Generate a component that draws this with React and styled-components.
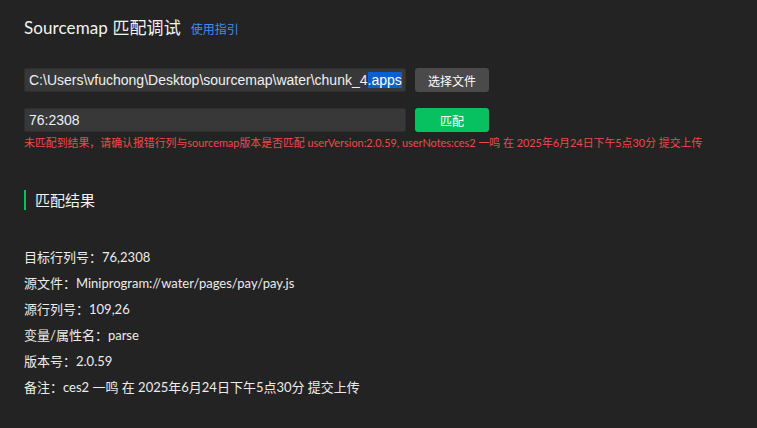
import React from "react";
import styled, { createGlobalStyle } from "styled-components";

const GlobalStyle = createGlobalStyle`
  html, body {
    margin: 0;
    padding: 0;
    background: #232323;
  }
  body {
    font-family: Lato, "Noto Sans CJK SC", sans-serif;
    color: #e8e8e8;
  }
`;

const Page = styled.div`
  width: 757px;
  height: 428px;
  box-sizing: border-box;
  padding: 14px 24px 0;
  background: #232323;
  overflow: hidden;
`;

const Header = styled.div`
  display: flex;
  align-items: baseline;
  gap: 10px;
  height: 24px;
`;

const Title = styled.h1`
  margin: 0;
  font-size: 17px;
  font-weight: 400;
  color: #f2f2f2;
  letter-spacing: 0.1px;
`;

const GuideLink = styled.a`
  font-size: 12px;
  color: #3f8ef0;
  text-decoration: none;
  cursor: pointer;
`;

const Row = styled.div`
  display: flex;
  align-items: center;
  gap: 9px;
  margin-top: ${(p) => p.$top}px;
`;

const Field = styled.div`
  width: 382px;
  height: 24px;
  box-sizing: border-box;
  padding: 0 4px;
  background: #383838;
  border: 1px solid #2e2e2e;
  border-radius: 2px;
  font-family: "Liberation Sans", Arial, sans-serif;
  font-size: 14px;
  line-height: 22px;
  color: #f0f0f0;
  white-space: nowrap;
  overflow: hidden;
`;

const Selected = styled.span`
  background: #0b5fce;
  color: #ffffff;
`;

const Button = styled.button`
  width: 74px;
  height: 24px;
  border: none;
  border-radius: 3px;
  padding: 0;
  background: ${(p) => (p.$primary ? "#07c160" : "#4a4a4a")};
  color: #ffffff;
  font-family: "Noto Sans CJK SC", sans-serif;
  font-size: 12px;
  cursor: pointer;
`;

const ErrorText = styled.p`
  margin: 4px 0 0;
  font-size: 10.9px;
  line-height: 14px;
  color: #f0494b;
  white-space: nowrap;
`;

const SectionTitle = styled.h2`
  margin: 40px 0 0;
  padding-left: 9px;
  border-left: 2px solid #07c160;
  height: 20px;
  line-height: 20px;
  font-size: 15px;
  font-weight: 400;
  color: #f2f2f2;
`;

const ResultList = styled.div`
  display: flex;
  flex-direction: column;
  margin-top: 34px;
`;

const ResultRow = styled.div`
  height: 26px;
  line-height: 26px;
  font-size: 13px;
  color: #ececec;
  white-space: nowrap;
`;

const results = [
  ["目标行列号：", "76,2308"],
  ["源文件：", "Miniprogram://water/pages/pay/pay.js"],
  ["源行列号：", "109,26"],
  ["变量/属性名：", "parse"],
  ["版本号：", "2.0.59"],
  ["备注：", "ces2 一鸣 在 2025年6月24日下午5点30分 提交上传"],
];

export default function App() {
  return (
    <>
      <GlobalStyle />
      <Page>
        <Header>
          <Title>Sourcemap 匹配调试</Title>
          <GuideLink>使用指引</GuideLink>
        </Header>

        <Row $top={30}>
          <Field>
            C:\Users\vfuchong\Desktop\sourcemap\water\chunk_4<Selected>.apps</Selected>
          </Field>
          <Button>选择文件</Button>
        </Row>

        <Row $top={16}>
          <Field>76:2308</Field>
          <Button $primary>匹配</Button>
        </Row>

        <ErrorText>
          未匹配到结果，请确认报错行列与sourcemap版本是否匹配 userVersion:2.0.59, userNotes:ces2 一鸣 在 2025年6月24日下午5点30分 提交上传
        </ErrorText>

        <SectionTitle>匹配结果</SectionTitle>

        <ResultList>
          {results.map(([label, value]) => (
            <ResultRow key={label}>
              {label}
              {value}
            </ResultRow>
          ))}
        </ResultList>
      </Page>
    </>
  );
}
